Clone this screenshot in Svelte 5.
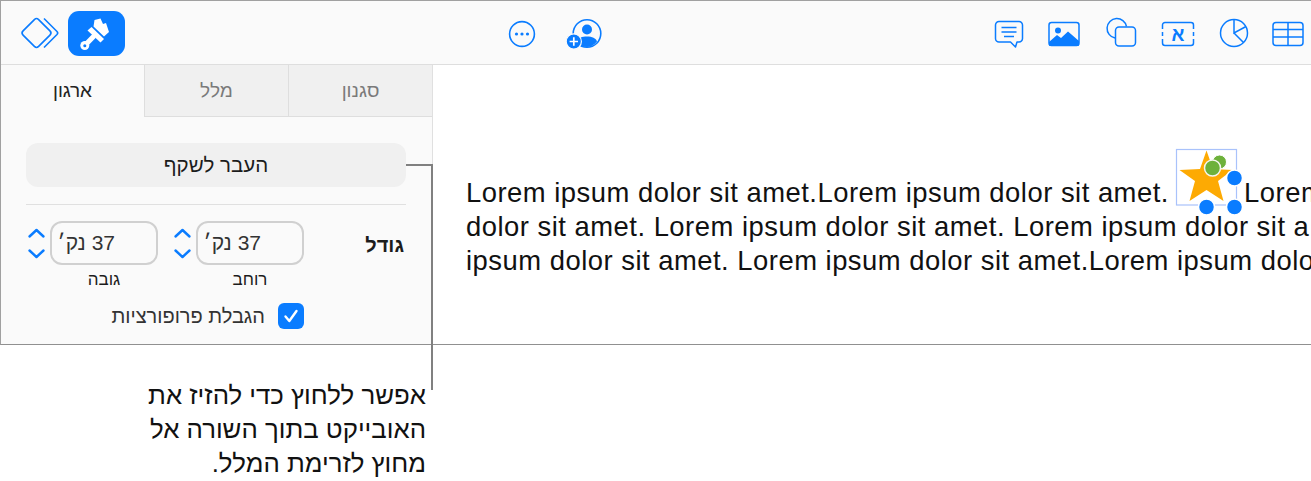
<script>
  const tabs = [
    { label: 'סגנון', active: false },
    { label: 'מלל', active: false },
    { label: 'ארגון', active: true }
  ];
  const fields = [
    { label: 'רוחב', value: '37 נק׳' },
    { label: 'גובה', value: '37 נק׳' }
  ];
</script>

<div class="page">
  <div class="frame">
    <header class="toolbar">
      <div class="group left">
        <svg class="ic-layers" width="42" height="38" viewBox="0 0 42 38" fill="none" stroke="#0a7cff" stroke-width="1.6" stroke-linejoin="round">
          <rect x="6.500" y="8" width="22" height="22" rx="3" transform="rotate(45 17.500 19)" />
          <path d="M25 4.500 L38 17.500 a2.200 2.200 0 0 1 0 3 L25 33.500" />
        </svg>
        <div class="brush">
          <svg width="34" height="34" viewBox="0 0 34 34" fill="#fff">
            <path d="M14.500 3 L20.500 1.500 L23 7 L26 6 L29 15 L24 19.500 L13.500 9.500 Z" />
            <path d="M7.500 13.500 L11.500 10 L24 22 L20.500 25.500 Z" />
            <path d="M4.800 28.500 L13.500 19.500" stroke="#fff" stroke-width="5" stroke-linecap="round" />
            <circle cx="4.800" cy="28.500" r="4.500" />
            <circle cx="4.800" cy="28.800" r="1.500" fill="#0a7cff" />
          </svg>
        </div>
      </div>
      <div class="group center">
        <svg width="28" height="28" viewBox="0 0 28 28" fill="none" stroke="#0a7cff" stroke-width="1.6">
          <circle cx="14" cy="14" r="12.400" />
          <g fill="#0a7cff" stroke="none"><circle cx="8.500" cy="14" r="1.600" /><circle cx="14" cy="14" r="1.600" /><circle cx="19.500" cy="14" r="1.600" /></g>
        </svg>
        <svg width="36" height="32" viewBox="0 0 36 32" fill="none">
          <g transform="translate(0 0.500)">
            <circle cx="21" cy="15" r="13.800" stroke="#0a7cff" stroke-width="1.600" />
            <circle cx="21" cy="11" r="5" fill="#0a7cff" />
            <path d="M11 24 C12 19 16 18 21 18 C26 18 30 19.500 31 23 C28 27 24 28.600 21 28.600 C16.500 28.600 13.500 27 11 24 Z" fill="#0a7cff" />
            <circle cx="7.800" cy="23" r="7.600" fill="#0a7cff" stroke="#fafafa" stroke-width="1.200" />
            <path d="M7.800 18.800 V27.200 M3.600 23 H12" stroke="#fff" stroke-width="1.700" />
          </g>
        </svg>
      </div>
      <div class="group right">
        <svg width="30" height="30" viewBox="0 0 30 30" fill="none" stroke="#0a7cff" stroke-width="1.500" stroke-linejoin="round">
          <g transform="translate(0 0.500)">
            <path d="M5 2 H25 a3.500 3.500 0 0 1 3.500 3.500 V19 a3.500 3.500 0 0 1 -3.500 3.500 H23 L21.500 27.500 L16.500 22.500 H5 a3.500 3.500 0 0 1 -3.500 -3.500 V5.500 A3.500 3.500 0 0 1 5 2 Z" />
            <path d="M7.500 8 H22.500 M7.500 12.500 H22.500 M10 17 H20" />
          </g>
        </svg>
        <svg width="32" height="26" viewBox="0 0 32 26" fill="none">
          <rect x="1" y="1.500" width="30" height="23" rx="2.500" stroke="#0a7cff" stroke-width="1.500" />
          <circle cx="10" cy="9.500" r="3" fill="#0a7cff" />
          <path d="M1 24 V21 L9 14 L13 17 L20 10.500 L31 20 V24 a1 1 0 0 1 -1 1 H2 a1 1 0 0 1 -1 -1 Z" fill="#0a7cff" />
        </svg>
        <svg width="32" height="30" viewBox="0 0 32 30" fill="none" stroke="#0a7cff" stroke-width="1.500">
          <g transform="translate(1.500 -2)">
            <path d="M9.500 21 A9.800 9.800 0 1 1 21 9.500" />
            <rect x="10" y="10" width="20" height="19" rx="3.500" />
          </g>
        </svg>
        <svg width="34" height="26" viewBox="0 0 34 26" fill="none" stroke="#0a7cff" stroke-width="1.500">
          <g transform="translate(1 0)">
            <path d="M1.500 8 V4 a2.500 2.500 0 0 1 2.500 -2.500 H30 a2.500 2.500 0 0 1 2.500 2.500 V8 M1.500 18 V22 a2.500 2.500 0 0 0 2.500 2.500 H30 a2.500 2.500 0 0 0 2.500 -2.500 V18 M1.500 11 V15 M32.500 11 V15" />
            <text class="aleph" x="17" y="20" text-anchor="middle" stroke="none" fill="#0a7cff">א</text>
          </g>
        </svg>
        <svg width="30" height="30" viewBox="0 0 30 30" fill="none" stroke="#0a7cff" stroke-width="1.500">
          <g transform="translate(1 -1)">
            <circle cx="15" cy="15" r="13.500" />
            <path d="M15 1.500 V15 L27 8.500 M15 15 L24.500 24.500" />
          </g>
        </svg>
        <svg width="32" height="26" viewBox="0 0 32 26" fill="none" stroke="#0a7cff" stroke-width="1.500">
          <rect x="1" y="1.500" width="30" height="23" rx="3" />
          <path d="M1 8.500 H31 M1 16 H31 M16 1.500 V24.500" />
        </svg>
      </div>
    </header>

    <div class="body">
      <aside class="panel" dir="rtl">
        <nav class="tabs">
          {#each tabs as t}
            <div class="tab" class:active={t.active}>{t.label}</div>
          {/each}
        </nav>
        <div class="panel-content">
          <button class="move">העבר לשקף</button>
          <hr class="sep" />
          <div class="size">
            <div class="size-label">גודל</div>
            <div class="fields">
              {#each fields as f}
                <div class="field">
                  <div class="input-row">
                    <div class="input">{f.value}</div>
                    <svg class="stepper" width="19" height="34" viewBox="0 0 19 34" fill="none" stroke="#0a7cff" stroke-width="2.400" stroke-linecap="round" stroke-linejoin="round">
                      <path d="M2.500 10.500 L9.500 4 L16.500 10.500" />
                      <path d="M2.500 24.500 L9.500 31 L16.500 24.500" />
                    </svg>
                  </div>
                  <div class="field-label">{f.label}</div>
                </div>
              {/each}
            </div>
          </div>
          <div class="constrain">
            <span class="check">
              <svg width="16" height="14" viewBox="0 0 16 14" fill="none" stroke="#fff" stroke-width="2.400" stroke-linecap="round" stroke-linejoin="round"><path d="M2.500 7.500 L6.300 12 L13.500 2" /></svg>
            </span>
            <span>הגבלת פרופורציות</span>
          </div>
        </div>
      </aside>
      <main class="doc">
        <p class="line">Lorem ipsum dolor sit amet.Lorem ipsum dolor sit amet. <span class="obj"><svg class="obj-art" width="76" height="70" viewBox="0 0 76 70" fill="none">
          <rect x="2.500" y="2.500" width="60" height="55.500" stroke="#a9c2fb" stroke-width="1.200" fill="#fff" />
          <path d="M32.500 3.500 L39 22 L58.500 23 L44 34 L49.500 54 L32.500 43 L15.500 54 L21 34 L5.500 23 L26 22 Z" fill="#fdaa03" />
          <circle cx="45.500" cy="15" r="7" fill="#6db13b" stroke="#fff" stroke-width="1" />
          <circle cx="38.500" cy="21" r="8" fill="#6db13b" stroke="#f5f5ee" stroke-width="1.500" />
          <g fill="#0a7cff" stroke="#fff" stroke-width="1.500">
            <circle cx="60.500" cy="31" r="8" /><circle cx="32.500" cy="60" r="8" /><circle cx="60.500" cy="60" r="8" />
          </g>
        </svg></span> Lorem</p>
        <p class="line">dolor sit amet. Lorem ipsum dolor sit amet. Lorem ipsum dolor sit a</p>
        <p class="line">ipsum dolor sit amet. Lorem ipsum dolor sit amet.Lorem ipsum dolo</p>
      </main>
    </div>
    <div class="leader"></div>
  </div>

  <p class="caption" dir="rtl">אפשר ללחוץ כדי להזיז את<br />האובייקט בתוך השורה אל<br />מחוץ לזרימת המלל.</p>
</div>

<style>
  :global(body) {
    margin: 0;
    background: #fff;
  }
  .page {
    width: 1311px;
    height: 481px;
    overflow: hidden;
    font-family: "Liberation Sans", Arial, sans-serif;
    color: #1c1c1c;
  }
  .frame {
    position: relative;
    height: 345px;
    box-sizing: border-box;
    border-top: 1px solid #a0a0a0;
    border-left: 1px solid #a0a0a0;
    border-bottom: 1px solid #909090;
    display: flex;
    flex-direction: column;
  }
  .toolbar {
    height: 64px;
    flex: none;
    box-sizing: border-box;
    background: #fafafa;
    border-bottom: 1px solid #dedede;
    padding-top: 2px;
    display: grid;
    grid-template-columns: 507px auto 1fr;
    align-items: center;
  }
  .group {
    display: flex;
    align-items: center;
  }
  .group svg {
    overflow: visible;
  }
  .left {
    padding-left: 18px;
    gap: 7px;
  }
  .ic-layers {
    margin-top: -2px;
  }
  .brush {
    width: 57px;
    height: 45px;
    border-radius: 11px;
    background: #0a7cff;
    display: flex;
    align-items: center;
    justify-content: center;
  }
  .center {
    gap: 30px;
  }
  .right {
    justify-content: flex-end;
    gap: 24px;
    padding-right: 7px;
  }
  .aleph {
    font-family: "Liberation Sans", sans-serif;
    font-size: 19px;
    font-weight: 700;
  }
  .body {
    flex: 1;
    min-height: 0;
    display: flex;
  }
  .panel {
    width: 432px;
    flex: none;
    box-sizing: border-box;
    background: #fafafa;
    border-right: 1px solid #e0e0e0;
    display: flex;
    flex-direction: column;
  }
  .tabs {
    display: flex;
    height: 52px;
    flex: none;
  }
  .tab {
    flex: 1;
    display: flex;
    align-items: center;
    justify-content: center;
    background: #f0f0f0;
    color: #7a7a7a;
    font-size: 19px;
    box-sizing: border-box;
    border-bottom: 1px solid #dedede;
    border-left: 1px solid #dedede;
  }
  .tab.active {
    background: #fafafa;
    color: #222;
    border-bottom: none;
    border-left: none;
  }
  .panel-content {
    padding: 26px 26px 0 25px;
    display: flex;
    flex-direction: column;
  }
  .move {
    height: 44px;
    border: none;
    border-radius: 12px;
    background: #f0f0f0;
    font: inherit;
    font-size: 20.500px;
    color: #1c1c1c;
    padding: 0;
  }
  .sep {
    width: 100%;
    margin: 17px 0 16px;
    border: none;
    border-top: 1px solid #e0e0e0;
  }
  .size {
    display: flex;
    align-items: flex-start;
    justify-content: space-between;
    padding-right: 2px;
  }
  .size-label {
    font-weight: 700;
    font-size: 20px;
    line-height: 48px;
  }
  .fields {
    display: flex;
    gap: 15px;
    margin-left: 1px;
  }
  .field {
    width: 131px;
  }
  .input-row {
    display: flex;
    align-items: center;
    gap: 4px;
  }
  .input {
    width: 108px;
    height: 44px;
    box-sizing: border-box;
    border: 2px solid #d0d0d0;
    border-radius: 12px;
    font-size: 21px;
    padding-right: 41px;
    display: flex;
    align-items: center;
    color: #333;
    white-space: nowrap;
  }
  .stepper {
    flex: none;
  }
  .field-label {
    width: 108px;
    text-align: center;
    font-size: 17px;
    margin-top: 5px;
    line-height: 20px;
  }
  .constrain {
    display: flex;
    align-items: center;
    gap: 13px;
    margin-top: 13px;
    margin-right: 102px;
    font-size: 20px;
    color: #333;
  }
  .check {
    width: 26px;
    height: 26px;
    flex: none;
    border-radius: 6px;
    background: #0a7cff;
    display: flex;
    align-items: center;
    justify-content: center;
  }
  .doc {
    flex: 1;
    min-width: 0;
    background: #fff;
    overflow: hidden;
    padding: 111px 0 0 33px;
  }
  .line {
    margin: 0;
    font-size: 27.400px;
    letter-spacing: 0.500px;
    line-height: 34px;
    white-space: nowrap;
    color: #111;
  }
  .obj {
    display: inline-block;
    position: relative;
    width: 59px;
    height: 0;
  }
  .obj-art {
    position: absolute;
    left: -3.500px;
    bottom: -15px;
  }
  .leader {
    position: absolute;
    left: 405px;
    top: 163px;
    width: 25px;
    height: 224px;
    border-top: 2px solid #808080;
    border-right: 2px solid #808080;
    pointer-events: none;
  }
  .caption {
    margin: 33px 885px 0 0;
    font-size: 25.800px;
    line-height: 34px;
    color: #111;
  }
</style>
